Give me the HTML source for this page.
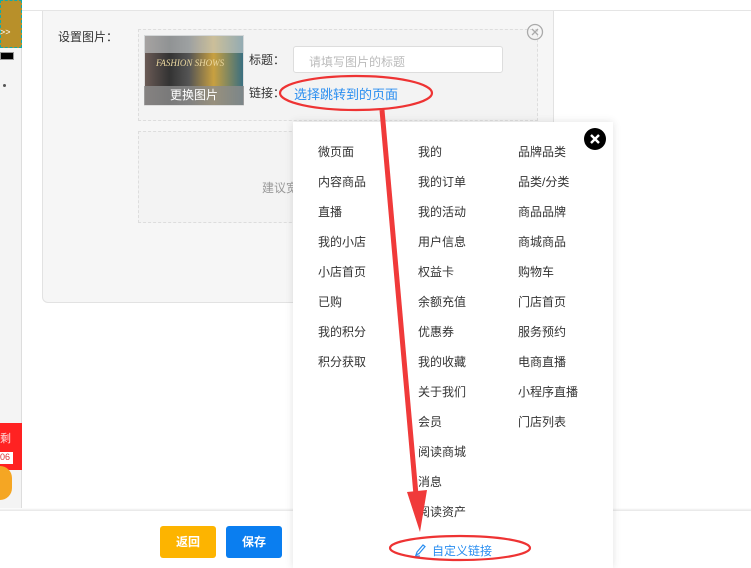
<!DOCTYPE html>
<html><head><meta charset="utf-8"><style>
*{margin:0;padding:0;box-sizing:border-box}
body{width:751px;height:568px;overflow:hidden;background:#fff;position:relative;font-family:"Liberation Sans","Noto Sans CJK SC",sans-serif;font-size:12px;color:#333}
.abs{position:absolute}
.it{position:absolute;font-size:12px;color:#333;line-height:14px}
</style></head><body>
<div class="abs" style="left:0;top:10px;width:751px;height:1px;background:#e5e5e5"></div>
<div class="abs" style="left:0;top:0;width:22px;height:511px;background:#f4f4f4;border-right:1px solid #ddd"></div>
<div class="abs" style="left:0;top:0;width:22px;height:48px;background:#b8902a;border:1px dashed #1aa"></div>
<div class="abs" style="left:0;top:27px;font-size:9px;color:#fff">&gt;&gt;</div>
<div class="abs" style="left:0;top:52px;width:14px;height:8px;background:#000;border:1px solid #999"></div>
<div class="abs" style="left:3px;top:84px;width:3px;height:3px;border-radius:50%;background:#555"></div>
<div class="abs" style="left:0;top:423px;width:22px;height:47px;background:#f22"></div>
<div class="abs" style="left:0;top:430px;font-size:11px;color:#fdd">剩</div>
<div class="abs" style="left:0;top:452px;width:13px;height:12px;background:#fff;font-size:9px;color:#d33">06</div>
<div class="abs" style="left:0;top:466px;width:12px;height:34px;border-radius:0 12px 12px 0;background:#f5a623"></div>
<div class="abs" style="left:42px;top:11px;width:512px;height:292px;background:#f6f6f6;border:1px solid #e2e2e2;border-top:none;border-radius:0 0 6px 6px"></div>
<div class="abs" style="left:58px;top:28px;font-size:12px;color:#333">设置图片：</div>
<div class="abs" style="left:138px;top:29px;width:400px;height:92px;border:1px dashed #ddd;background:#f3f3f3"></div>
<div class="abs" style="left:138px;top:131px;width:400px;height:92px;border:1px dashed #ddd;background:#f3f3f3"></div>
<div class="abs" style="left:262px;top:179px;color:#999">建议宽</div>
<div class="abs" style="left:144px;top:35px;width:100px;height:71px;background:linear-gradient(90deg,#6a5a55,#333 25%,#555 45%,#c8a040 70%,#3a6f80);border:1px solid #ddd"></div>
<div class="abs" style="left:144px;top:35px;width:100px;height:18px;background:#cfd4d6;opacity:.6"></div>
<div class="abs" style="left:156px;top:58px;font-family:'Liberation Serif',serif;font-style:italic;font-size:9px;color:#ecd9a0">FASHION SHOWS</div>
<div class="abs" style="left:144px;top:86px;width:100px;height:19px;background:rgba(140,140,140,.8);color:#fff;text-align:center;font-size:12px;line-height:19px">更换图片</div>
<div class="abs" style="left:249px;top:51px">标题：</div>
<div class="abs" style="left:293px;top:46px;width:210px;height:27px;border:1px solid #ddd;border-radius:3px;background:#fff;color:#bbb;padding:6px 15px;font-size:12px">请填写图片的标题</div>
<div class="abs" style="left:249px;top:84px">链接：</div>
<div class="abs" style="left:294px;top:84px;color:#2a8ef0;font-size:13px">选择跳转到的页面</div>
<svg class="abs" style="left:525px;top:22px" width="20" height="20"><circle cx="10" cy="10" r="7.5" fill="none" stroke="#aaa" stroke-width="1.3"/><path d="M7 7l6 6M13 7l-6 6" stroke="#aaa" stroke-width="1.3"/></svg>
<div class="abs" style="left:0;top:508px;width:751px;height:3px;background:linear-gradient(#fff,#e6e6e6)"></div>
<div class="abs" style="left:0;top:511px;width:751px;height:57px;background:#fff"></div>
<div class="abs" style="left:160px;top:526px;width:56px;height:32px;background:#fdb400;border-radius:3px;color:#fff;font-weight:bold;text-align:center;line-height:32px">返回</div>
<div class="abs" style="left:226px;top:526px;width:56px;height:32px;background:#0a7ef0;border-radius:3px;color:#fff;font-weight:bold;text-align:center;line-height:32px">保存</div>
<div class="abs" style="left:293px;top:122px;width:320px;height:446px;background:#fff;box-shadow:0 0 8px rgba(0,0,0,.12)"></div>
<svg class="abs" style="left:583px;top:127px" width="24" height="24"><circle cx="12" cy="12" r="11" fill="#000"/><path d="M8 8l8 8M16 8l-8 8" stroke="#fff" stroke-width="2.4"/></svg>
<div class="it" style="left:318px;top:145px">微页面</div><div class="it" style="left:418px;top:145px">我的</div><div class="it" style="left:518px;top:145px">品牌品类</div>
<div class="it" style="left:318px;top:175px">内容商品</div><div class="it" style="left:418px;top:175px">我的订单</div><div class="it" style="left:518px;top:175px">品类/分类</div>
<div class="it" style="left:318px;top:205px">直播</div><div class="it" style="left:418px;top:205px">我的活动</div><div class="it" style="left:518px;top:205px">商品品牌</div>
<div class="it" style="left:318px;top:235px">我的小店</div><div class="it" style="left:418px;top:235px">用户信息</div><div class="it" style="left:518px;top:235px">商城商品</div>
<div class="it" style="left:318px;top:265px">小店首页</div><div class="it" style="left:418px;top:265px">权益卡</div><div class="it" style="left:518px;top:265px">购物车</div>
<div class="it" style="left:318px;top:295px">已购</div><div class="it" style="left:418px;top:295px">余额充值</div><div class="it" style="left:518px;top:295px">门店首页</div>
<div class="it" style="left:318px;top:325px">我的积分</div><div class="it" style="left:418px;top:325px">优惠券</div><div class="it" style="left:518px;top:325px">服务预约</div>
<div class="it" style="left:318px;top:355px">积分获取</div><div class="it" style="left:418px;top:355px">我的收藏</div><div class="it" style="left:518px;top:355px">电商直播</div>
<div class="it" style="left:418px;top:385px">关于我们</div><div class="it" style="left:518px;top:385px">小程序直播</div>
<div class="it" style="left:418px;top:415px">会员</div><div class="it" style="left:518px;top:415px">门店列表</div>
<div class="it" style="left:418px;top:445px">阅读商城</div>
<div class="it" style="left:418px;top:475px">消息</div>
<div class="it" style="left:418px;top:505px">阅读资产</div>
<svg class="abs" style="left:414px;top:543px" width="12" height="14"><path d="M2 12l1-3 6-7 2 1.6-6 7z" fill="none" stroke="#2a8ef0" stroke-width="1.2"/><path d="M1 13h5" stroke="#2a8ef0"/></svg>
<div class="it" style="left:432px;top:544px;color:#2a8ef0">自定义链接</div>
<svg class="abs" style="left:0;top:0" width="751" height="568">
<ellipse cx="356" cy="93" rx="76" ry="17" fill="none" stroke="#e33" stroke-width="2.2"/>
<ellipse cx="460" cy="548" rx="70" ry="12" fill="none" stroke="#e33" stroke-width="2.2"/>
<path d="M382 110 L416 495" stroke="#f03a3a" stroke-width="5"/>
<polygon points="407,492 427,490 420,532" fill="#f03a3a"/>
</svg>
</body></html>
